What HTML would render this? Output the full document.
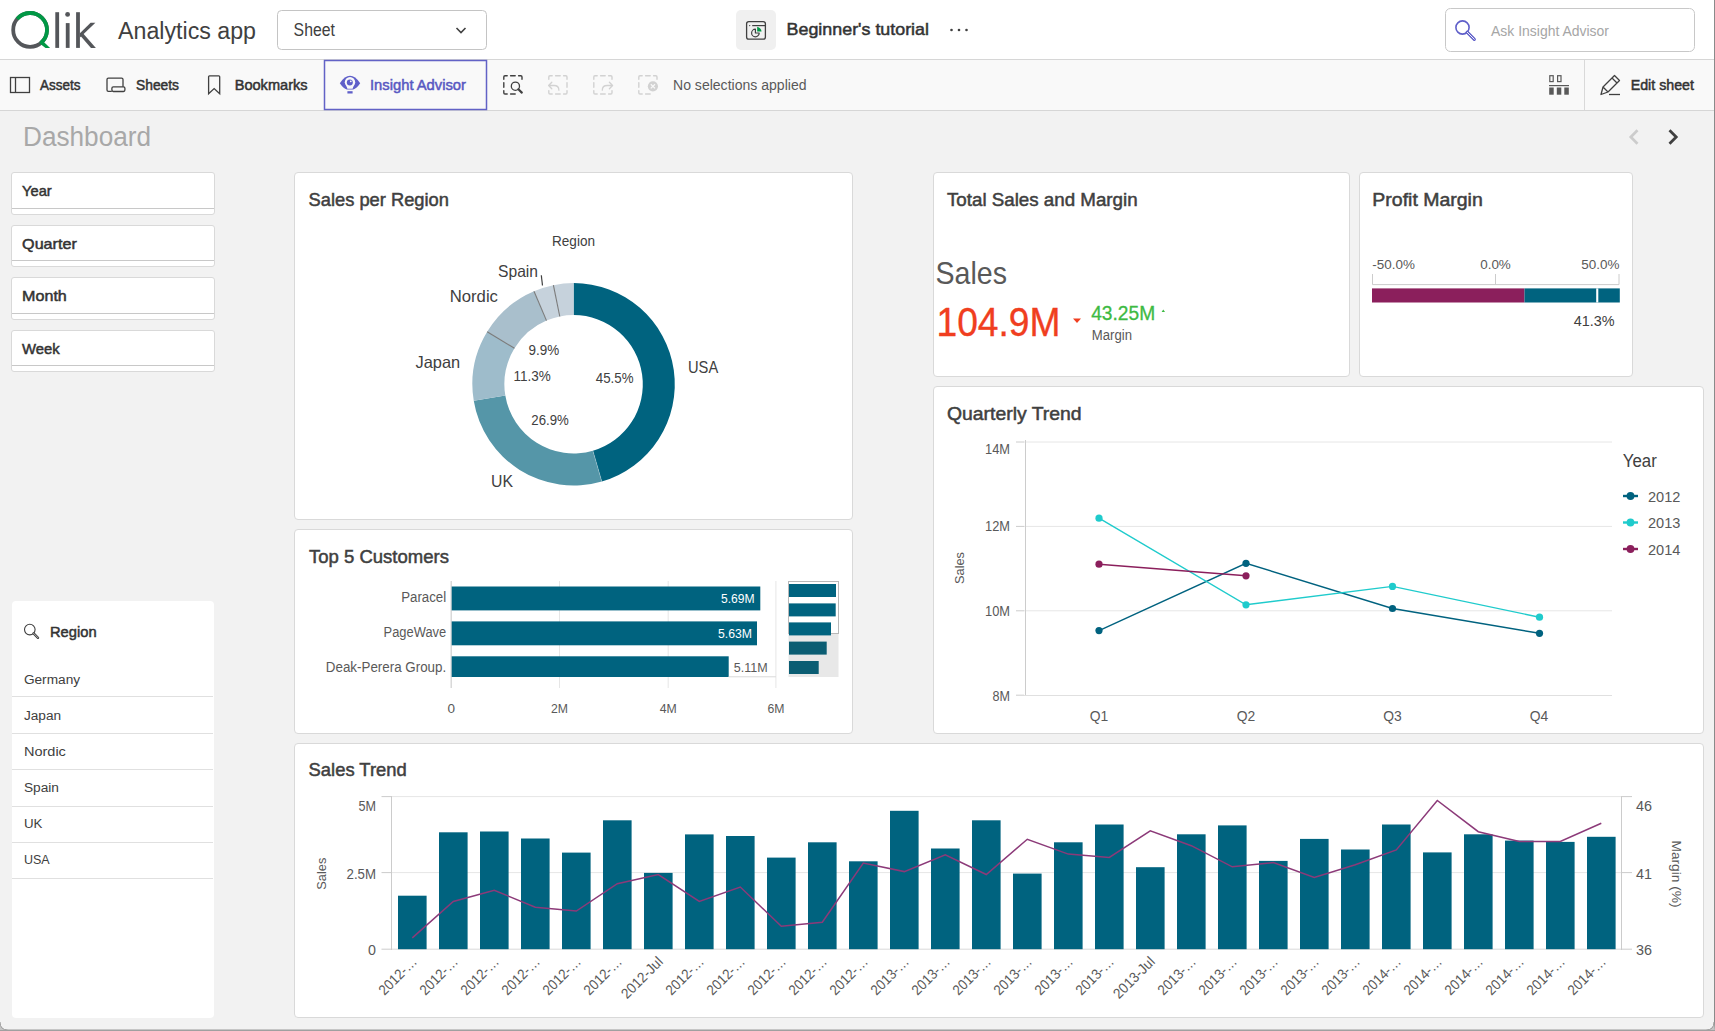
<!DOCTYPE html>
<html><head><meta charset="utf-8"><title>Qlik Analytics app</title>
<style>
html,body{margin:0;padding:0;width:1715px;height:1031px;overflow:hidden;background:#f2f2f2;font-family:"Liberation Sans", sans-serif;}
.abs{position:absolute;}
svg{position:absolute;left:0;top:0;overflow:visible;}
svg text{font-family:"Liberation Sans", sans-serif;}
.card{position:absolute;background:#fff;border:1px solid #d9d9d9;border-radius:4px;box-sizing:border-box;}
</style></head><body>

<div class="abs" style="left:0;top:0;width:1715px;height:59px;background:#fff;border-bottom:1px solid #d6d6d6;"></div>
<div class="abs" style="left:0;top:60px;width:1715px;height:50px;background:#f9f9f9;border-bottom:1px solid #d6d6d6;"></div>
<div class="abs" style="left:11px;top:172px;width:204px;height:43px;background:#fff;border:1px solid #d9d9d9;border-radius:3px;box-sizing:border-box;"></div>
<div class="abs" style="left:12px;top:208px;width:202px;height:1px;background:#c8c8c8;"></div>
<div class="abs" style="left:11px;top:225px;width:204px;height:42px;background:#fff;border:1px solid #d9d9d9;border-radius:3px;box-sizing:border-box;"></div>
<div class="abs" style="left:12px;top:260px;width:202px;height:1px;background:#c8c8c8;"></div>
<div class="abs" style="left:11px;top:277px;width:204px;height:43px;background:#fff;border:1px solid #d9d9d9;border-radius:3px;box-sizing:border-box;"></div>
<div class="abs" style="left:12px;top:313px;width:202px;height:1px;background:#c8c8c8;"></div>
<div class="abs" style="left:11px;top:330px;width:204px;height:42px;background:#fff;border:1px solid #d9d9d9;border-radius:3px;box-sizing:border-box;"></div>
<div class="abs" style="left:12px;top:365px;width:202px;height:1px;background:#c8c8c8;"></div>
<div class="abs" style="left:12px;top:601px;width:202px;height:417px;background:#fff;border-radius:4px;"></div>
<div class="abs" style="left:12px;top:696px;width:201px;height:1px;background:#e0e0e0;"></div>
<div class="abs" style="left:12px;top:733px;width:201px;height:1px;background:#e0e0e0;"></div>
<div class="abs" style="left:12px;top:769px;width:201px;height:1px;background:#e0e0e0;"></div>
<div class="abs" style="left:12px;top:806px;width:201px;height:1px;background:#e0e0e0;"></div>
<div class="abs" style="left:12px;top:842px;width:201px;height:1px;background:#e0e0e0;"></div>
<div class="abs" style="left:12px;top:878px;width:201px;height:1px;background:#e0e0e0;"></div>
<div class="card" style="left:294px;top:172px;width:559px;height:348px;"></div>
<div class="card" style="left:294px;top:529px;width:559px;height:205px;"></div>
<div class="card" style="left:933px;top:172px;width:417px;height:205px;"></div>
<div class="card" style="left:1359px;top:172px;width:274px;height:205px;"></div>
<div class="card" style="left:933px;top:386px;width:771px;height:348px;"></div>
<div class="card" style="left:294px;top:743px;width:1410px;height:275px;"></div>
<svg width="1715" height="1031" viewBox="0 0 1715 1031"><g>
<circle cx="30.1" cy="29.9" r="16.9" fill="none" stroke="#54565a" stroke-width="3.8"/>
<path d="M 17.15 19.04 A 16.9 16.9 0 1 1 40.74 43.03" fill="none" stroke="#009845" stroke-width="3.8"/>
<path d="M 39.3 43.3 L 42.3 40.4 L 50.1 47.9 L 45.6 47.9 Z" fill="#009845"/>
<rect x="55.3" y="12.2" width="3.8" height="35.7" fill="#54565a"/>
<rect x="65.8" y="23.1" width="3.8" height="24.8" fill="#54565a"/>
<circle cx="67.6" cy="14.4" r="2.4" fill="#54565a"/>
<rect x="76.1" y="12.2" width="3.8" height="35.7" fill="#54565a"/>
<path d="M 79.9 33.2 L 90.6 22.7 L 95.4 22.7 L 79.9 37.6 Z" fill="#54565a"/>
<path d="M 82.3 32.5 L 95.9 47.9 L 91 47.9 L 79.9 35.3 Z" fill="#54565a"/>
</g>
<text x="118.0" y="38.5" font-size="23.98" fill="#404040" textLength="138.0" lengthAdjust="spacingAndGlyphs">Analytics app</text>
<rect x="277.5" y="10.5" width="209" height="39" rx="4" fill="#fff" stroke="#c4c4c4"/>
<text x="293.6" y="36.0" font-size="17.44" fill="#404040" textLength="41.3" lengthAdjust="spacingAndGlyphs">Sheet</text>
<path d="M 456.5 28 L 461 32.5 L 465.5 28" stroke="#404040" stroke-width="1.6" fill="none"/>
<rect x="736" y="10" width="40" height="40" rx="5" fill="#f0f0f0"/>
<rect x="746.6" y="21.6" width="18.8" height="17.6" rx="2.2" fill="none" stroke="#404040" stroke-width="1.3"/>
<line x1="752.2" y1="25.6" x2="765.5" y2="25.6" stroke="#404040" stroke-width="1.2"/>
<circle cx="749.7" cy="25.6" r="0.7" fill="#404040"/>
<path d="M 755.4 29.2 A 3.8 3.8 0 1 0 759.2 33 L 755.4 33 Z" fill="none" stroke="#404040" stroke-width="1.2" stroke-linejoin="round"/>
<path d="M 757.2 26.8 L 757.2 31.4 L 761.6 31.4 Q 761 28 757.2 26.8 Z" fill="#009845"/>
<text x="786.6" y="35.4" font-size="17.15" stroke="#333333" stroke-width="0.5" fill="#333333" textLength="142.4" lengthAdjust="spacingAndGlyphs">Beginner's tutorial</text>
<circle cx="951.5" cy="30" r="1.3" fill="#404040"/>
<circle cx="959" cy="30" r="1.3" fill="#404040"/>
<circle cx="966.5" cy="30" r="1.3" fill="#404040"/>
<rect x="1445.5" y="8.5" width="249" height="43" rx="5" fill="#fff" stroke="#c8c8c8"/>
<circle cx="1462.5" cy="27.5" r="6.6" fill="none" stroke="#5f5fc9" stroke-width="1.6"/>
<path d="M 1467.2 32.2 L 1474.3 39.3" stroke="#5f5fc9" stroke-width="3.2" stroke-linecap="round"/>
<path d="M 1467.2 32.2 L 1474.3 39.3" stroke="#fff" stroke-width="0.9" stroke-linecap="round"/>
<text x="1491.0" y="35.7" font-size="14.83" fill="#a6a6a6" textLength="118.0" lengthAdjust="spacingAndGlyphs">Ask Insight Advisor</text>
<rect x="1714" y="0" width="1" height="1031" fill="#8a8a8a"/>
<rect x="10.5" y="77.5" width="19" height="15" fill="none" stroke="#404040" stroke-width="1.3"/>
<line x1="15.5" y1="77.5" x2="15.5" y2="92.5" stroke="#404040" stroke-width="1.3"/>
<text x="40.0" y="90.0" font-size="14.68" stroke="#333333" stroke-width="0.5" fill="#333333" textLength="40.5" lengthAdjust="spacingAndGlyphs">Assets</text>
<path d="M 123 86.8 V 79.6 Q 123 78.2 121.6 78.2 H 108.4 Q 107 78.2 107 79.6 V 90 Q 107 91.4 108.4 91.4 H 111.8" fill="none" stroke="#404040" stroke-width="1.3"/>
<rect x="111.9" y="86.8" width="13" height="4.7" rx="1.4" fill="none" stroke="#404040" stroke-width="1.3"/>
<text x="136.0" y="90.0" font-size="14.68" stroke="#333333" stroke-width="0.5" fill="#333333" textLength="43.0" lengthAdjust="spacingAndGlyphs">Sheets</text>
<path d="M 208.6 93.8 V 76.8 Q 208.6 75.9 209.5 75.9 H 218.8 Q 219.7 75.9 219.7 76.8 V 93.8 L 214.15 88.6 Z" fill="none" stroke="#404040" stroke-width="1.3" stroke-linejoin="miter"/>
<text x="234.7" y="90.0" font-size="14.68" stroke="#333333" stroke-width="0.5" fill="#333333" textLength="72.9" lengthAdjust="spacingAndGlyphs">Bookmarks</text>
<rect x="324.5" y="60.5" width="162" height="49" fill="#f9f9f9" stroke="#6262c6" stroke-width="1.5"/>
<path d="M 339.8 83.2 Q 350 68.5 360.2 83.2 Q 356.5 88.6 353.2 89.6 L 346.8 89.6 Q 343.5 88.6 339.8 83.2 Z" fill="#5f5fc9"/>
<circle cx="350" cy="82.3" r="5.2" fill="#f9f9f9"/>
<path d="M 346.3 85.6 L 353.7 85.6 L 352.6 88.8 L 347.4 88.8 Z" fill="#f9f9f9"/>
<circle cx="349.8" cy="82.4" r="3" fill="#5f5fc9"/>
<circle cx="350.8" cy="81.3" r="0.9" fill="#f9f9f9"/>
<rect x="347.4" y="91.2" width="5.2" height="2.3" fill="#5f5fc9"/>
<text x="370.0" y="90.0" font-size="14.68" stroke="#5858c2" stroke-width="0.5" fill="#5858c2" textLength="96.0" lengthAdjust="spacingAndGlyphs">Insight Advisor</text>
<path d="M 503.8 79.2 V 77.0 Q 503.8 75.8 505.0 75.8 H 507.2 M 518.6 75.8 H 520.8 Q 522.0 75.8 522.0 77.0 V 79.2 M 507.2 94.0 H 505.0 Q 503.8 94.0 503.8 92.8 V 90.6 M 510.6 75.8 H 515.2 M 510.6 94.0 H 515.2 M 503.8 82.6 V 87.2" fill="none" stroke="#404040" stroke-width="1.4" stroke-linecap="round"/>
<circle cx="515.4" cy="86.2" r="4.1" fill="none" stroke="#404040" stroke-width="1.3"/>
<path d="M 518.4 89.3 L 521.8 92.6" stroke="#404040" stroke-width="2.2" stroke-linecap="round"/>
<path d="M 548.8 79.2 V 77.0 Q 548.8 75.8 550.0 75.8 H 552.1999999999999 M 563.6 75.8 H 565.8 Q 567.0 75.8 567.0 77.0 V 79.2 M 567.0 90.6 V 92.8 Q 567.0 94.0 565.8 94.0 H 563.6 M 552.1999999999999 94.0 H 550.0 Q 548.8 94.0 548.8 92.8 V 90.6 M 555.5999999999999 75.8 H 560.2 M 555.5999999999999 94.0 H 560.2 M 567.0 82.6 V 87.2" fill="none" stroke="#d2d2d2" stroke-width="1.4" stroke-linecap="round"/>
<path d="M 551.8 82.2 L 548.6 85.5 L 551.8 88.8 M 548.6 85.5 H 554 Q 558.9 85.5 558.9 90.2" fill="none" stroke="#d2d2d2" stroke-width="1.3" stroke-linecap="round" stroke-linejoin="round"/>
<path d="M 593.8 79.2 V 77.0 Q 593.8 75.8 595.0 75.8 H 597.1999999999999 M 608.6 75.8 H 610.8 Q 612.0 75.8 612.0 77.0 V 79.2 M 612.0 90.6 V 92.8 Q 612.0 94.0 610.8 94.0 H 608.6 M 597.1999999999999 94.0 H 595.0 Q 593.8 94.0 593.8 92.8 V 90.6 M 600.5999999999999 75.8 H 605.2 M 600.5999999999999 94.0 H 605.2 M 593.8 82.6 V 87.2" fill="none" stroke="#d2d2d2" stroke-width="1.4" stroke-linecap="round"/>
<path d="M 609.4 82.2 L 612.6 85.5 L 609.4 88.8 M 612.6 85.5 H 607.2 Q 602.3 85.5 602.3 90.2" fill="none" stroke="#d2d2d2" stroke-width="1.3" stroke-linecap="round" stroke-linejoin="round"/>
<path d="M 638.8 79.2 V 77.0 Q 638.8 75.8 640.0 75.8 H 642.1999999999999 M 653.6 75.8 H 655.8 Q 657.0 75.8 657.0 77.0 V 79.2 M 642.1999999999999 94.0 H 640.0 Q 638.8 94.0 638.8 92.8 V 90.6 M 645.5999999999999 75.8 H 650.2 M 645.5999999999999 94.0 H 650.2 M 638.8 82.6 V 87.2" fill="none" stroke="#d2d2d2" stroke-width="1.4" stroke-linecap="round"/>
<circle cx="652.9" cy="86.3" r="5.1" fill="#d2d2d2"/>
<path d="M 650.8 84.2 L 655 88.4 M 655 84.2 L 650.8 88.4" stroke="#f9f9f9" stroke-width="1.3"/>
<text x="673.0" y="90.0" font-size="15.26" fill="#595959" textLength="133.5" lengthAdjust="spacingAndGlyphs">No selections applied</text>
<line x1="1584.5" y1="60" x2="1584.5" y2="110" stroke="#d9d9d9"/>
<rect x="1549.8" y="75.7" width="3.4" height="5.9" fill="none" stroke="#595959" stroke-width="1.2"/>
<rect x="1557.6" y="75.7" width="3.4" height="5.9" fill="none" stroke="#595959" stroke-width="1.2"/>
<line x1="1549" y1="85.6" x2="1569" y2="85.6" stroke="#595959" stroke-width="1.2"/>
<rect x="1549.2" y="87.5" width="4.5" height="7.2" fill="#595959"/>
<rect x="1556.8" y="87.5" width="4.5" height="7.2" fill="#595959"/>
<rect x="1564.3" y="87.5" width="4.5" height="7.2" fill="#595959"/>
<path d="M 1601 94.5 L 1603 87 L 1614.5 75.5 L 1619.5 80.5 L 1608 92 Z M 1603 87 L 1608 92 M 1612 78 L 1617 83" fill="none" stroke="#404040" stroke-width="1.3" stroke-linejoin="round"/>
<line x1="1609" y1="94.5" x2="1620" y2="94.5" stroke="#404040" stroke-width="1.3"/>
<text x="1630.7" y="90.0" font-size="14.68" stroke="#333333" stroke-width="0.5" fill="#333333" textLength="63.3" lengthAdjust="spacingAndGlyphs">Edit sheet</text>
<text x="23.0" y="146.0" font-size="28.34" fill="#a8a8a8" textLength="128.0" lengthAdjust="spacingAndGlyphs">Dashboard</text>
<path d="M 1637.5 130.3 L 1630.8 137 L 1637.5 143.7" fill="none" stroke="#cccccc" stroke-width="2.7"/>
<path d="M 1669.5 130.3 L 1676.2 137 L 1669.5 143.7" fill="none" stroke="#404040" stroke-width="2.8"/>
<text x="22.1" y="196.0" font-size="15.12" stroke="#333333" stroke-width="0.5" fill="#333333" textLength="29.6" lengthAdjust="spacingAndGlyphs">Year</text>
<text x="22.1" y="249.1" font-size="15.12" stroke="#333333" stroke-width="0.5" fill="#333333" textLength="54.7" lengthAdjust="spacingAndGlyphs">Quarter</text>
<text x="22.1" y="301.0" font-size="15.12" stroke="#333333" stroke-width="0.5" fill="#333333" textLength="44.7" lengthAdjust="spacingAndGlyphs">Month</text>
<text x="22.1" y="353.9" font-size="15.12" stroke="#333333" stroke-width="0.5" fill="#333333" textLength="37.7" lengthAdjust="spacingAndGlyphs">Week</text>
<circle cx="29.8" cy="629.6" r="5.3" fill="none" stroke="#404040" stroke-width="1.1"/>
<path d="M 33.6 633.4 L 38 637.8" stroke="#404040" stroke-width="2.4" stroke-linecap="round"/>
<path d="M 33.6 633.4 L 38 637.8" stroke="#fff" stroke-width="0.6" stroke-linecap="round"/>
<text x="50.0" y="636.8" font-size="14.97" stroke="#333333" stroke-width="0.5" fill="#333333" textLength="46.6" lengthAdjust="spacingAndGlyphs">Region</text>
<text x="23.9" y="683.7" font-size="13.66" fill="#404040" textLength="56.2" lengthAdjust="spacingAndGlyphs">Germany</text>
<text x="23.9" y="719.8" font-size="13.66" fill="#404040" textLength="37.2" lengthAdjust="spacingAndGlyphs">Japan</text>
<text x="23.9" y="755.9" font-size="13.66" fill="#404040" textLength="42.0" lengthAdjust="spacingAndGlyphs">Nordic</text>
<text x="23.9" y="792.0" font-size="13.66" fill="#404040" textLength="35.1" lengthAdjust="spacingAndGlyphs">Spain</text>
<text x="23.9" y="828.1" font-size="13.66" fill="#404040" textLength="18.5" lengthAdjust="spacingAndGlyphs">UK</text>
<text x="23.9" y="864.2" font-size="13.66" fill="#404040" textLength="25.7" lengthAdjust="spacingAndGlyphs">USA</text>
<text x="308.6" y="205.7" font-size="18.46" stroke="#404040" stroke-width="0.5" fill="#404040" textLength="140.3" lengthAdjust="spacingAndGlyphs">Sales per Region</text>
<text x="309.0" y="562.5" font-size="18.46" stroke="#404040" stroke-width="0.5" fill="#404040" textLength="139.9" lengthAdjust="spacingAndGlyphs">Top 5 Customers</text>
<text x="947.0" y="205.7" font-size="18.46" stroke="#404040" stroke-width="0.5" fill="#404040" textLength="190.6" lengthAdjust="spacingAndGlyphs">Total Sales and Margin</text>
<text x="1372.3" y="205.7" font-size="18.46" stroke="#404040" stroke-width="0.5" fill="#404040" textLength="110.5" lengthAdjust="spacingAndGlyphs">Profit Margin</text>
<text x="947.0" y="419.6" font-size="18.46" stroke="#404040" stroke-width="0.5" fill="#404040" textLength="134.6" lengthAdjust="spacingAndGlyphs">Quarterly Trend</text>
<text x="308.6" y="776.4" font-size="18.46" stroke="#404040" stroke-width="0.5" fill="#404040" textLength="98.1" lengthAdjust="spacingAndGlyphs">Sales Trend</text>
<path d="M 573.60 283.10 A 101.2 101.2 0 0 1 601.83 481.48 L 592.91 450.75 A 69.2 69.2 0 0 0 573.60 315.10 Z" fill="#00637f"/>
<path d="M 601.83 481.48 A 101.2 101.2 0 0 1 473.75 400.76 L 505.32 395.55 A 69.2 69.2 0 0 0 592.91 450.75 Z" fill="#5596a8"/>
<path d="M 473.75 400.76 A 101.2 101.2 0 0 1 487.15 331.69 L 514.48 348.33 A 69.2 69.2 0 0 0 505.32 395.55 Z" fill="#9ebccb"/>
<path d="M 487.15 331.69 A 101.2 101.2 0 0 1 533.99 291.17 L 546.52 320.62 A 69.2 69.2 0 0 0 514.48 348.33 Z" fill="#a9bfcc"/>
<path d="M 533.99 291.17 A 101.2 101.2 0 0 1 553.39 285.14 L 559.78 316.49 A 69.2 69.2 0 0 0 546.52 320.62 Z" fill="#c6d2dc"/>
<path d="M 553.39 285.14 A 101.2 101.2 0 0 1 573.60 283.10 L 573.60 315.10 A 69.2 69.2 0 0 0 559.78 316.49 Z" fill="#c6d2dc"/>
<line x1="487.15" y1="331.69" x2="514.48" y2="348.33" stroke="#7a7a7a" stroke-width="1.1"/>
<line x1="533.99" y1="291.17" x2="546.52" y2="320.62" stroke="#7a7a7a" stroke-width="1.1"/>
<line x1="553.39" y1="285.14" x2="559.78" y2="316.49" stroke="#7a7a7a" stroke-width="1.1"/>
<line x1="601.83" y1="481.48" x2="592.91" y2="450.75" stroke="#ffffff" stroke-width="0.5" opacity="0.5"/>
<line x1="541.3" y1="275.2" x2="542.5" y2="285.5" stroke="#404040" stroke-width="1.2"/>
<text x="552.0" y="245.5" font-size="13.95" fill="#404040" textLength="43.0" lengthAdjust="spacingAndGlyphs">Region</text>
<text x="498.0" y="276.6" font-size="16.28" fill="#404040" textLength="40.0" lengthAdjust="spacingAndGlyphs">Spain</text>
<text x="449.7" y="301.8" font-size="16.28" fill="#404040" textLength="48.3" lengthAdjust="spacingAndGlyphs">Nordic</text>
<text x="415.5" y="368.0" font-size="16.28" fill="#404040" textLength="44.7" lengthAdjust="spacingAndGlyphs">Japan</text>
<text x="688.0" y="373.0" font-size="16.28" fill="#404040" textLength="30.2" lengthAdjust="spacingAndGlyphs">USA</text>
<text x="491.0" y="487.0" font-size="16.28" fill="#404040" textLength="22.0" lengthAdjust="spacingAndGlyphs">UK</text>
<text x="528.5" y="355.0" font-size="13.95" fill="#404040" textLength="30.7" lengthAdjust="spacingAndGlyphs">9.9%</text>
<text x="513.5" y="381.0" font-size="13.95" fill="#404040" textLength="37.3" lengthAdjust="spacingAndGlyphs">11.3%</text>
<text x="595.8" y="383.0" font-size="13.95" fill="#404040" textLength="37.7" lengthAdjust="spacingAndGlyphs">45.5%</text>
<text x="531.3" y="425.0" font-size="13.95" fill="#404040" textLength="37.5" lengthAdjust="spacingAndGlyphs">26.9%</text>
<line x1="451.2" y1="581" x2="451.2" y2="688" stroke="#e6e6e6" stroke-width="1"/>
<line x1="559.5" y1="581" x2="559.5" y2="688" stroke="#e6e6e6" stroke-width="1"/>
<line x1="668.2" y1="581" x2="668.2" y2="688" stroke="#e6e6e6" stroke-width="1"/>
<line x1="775.9" y1="581" x2="775.9" y2="688" stroke="#e6e6e6" stroke-width="1"/>
<line x1="451.2" y1="581" x2="451.2" y2="688" stroke="#d0d0d0" stroke-width="1"/>
<rect x="451.7" y="586.5" width="308.6" height="23.9" fill="#00637f"/>
<rect x="451.7" y="621.4" width="305.3" height="23.9" fill="#00637f"/>
<rect x="451.7" y="656.3" width="277.0" height="20.7" fill="#00637f"/>
<text x="446.2" y="602.0" font-size="13.95" fill="#595959" text-anchor="end" textLength="45.0" lengthAdjust="spacingAndGlyphs">Paracel</text>
<text x="446.2" y="637.0" font-size="13.95" fill="#595959" text-anchor="end" textLength="62.6" lengthAdjust="spacingAndGlyphs">PageWave</text>
<text x="446.2" y="672.0" font-size="13.95" fill="#595959" text-anchor="end" textLength="120.4" lengthAdjust="spacingAndGlyphs">Deak-Perera Group.</text>
<text x="754.6" y="602.8" font-size="12.50" fill="#ffffff" text-anchor="end" textLength="33.6" lengthAdjust="spacingAndGlyphs">5.69M</text>
<text x="752.0" y="637.8" font-size="12.50" fill="#ffffff" text-anchor="end" textLength="34.0" lengthAdjust="spacingAndGlyphs">5.63M</text>
<text x="767.6" y="671.8" font-size="12.50" fill="#595959" text-anchor="end" textLength="33.9" lengthAdjust="spacingAndGlyphs">5.11M</text>
<line x1="728.7" y1="676.8" x2="775.9" y2="676.8" stroke="#d9d9d9" stroke-width="1"/>
<text x="451.2" y="712.5" font-size="13.52" fill="#595959" text-anchor="middle">0</text>
<text x="559.5" y="712.5" font-size="13.52" fill="#595959" text-anchor="middle" textLength="17.0" lengthAdjust="spacingAndGlyphs">2M</text>
<text x="668.2" y="712.5" font-size="13.52" fill="#595959" text-anchor="middle" textLength="17.0" lengthAdjust="spacingAndGlyphs">4M</text>
<text x="775.9" y="712.5" font-size="13.52" fill="#595959" text-anchor="middle" textLength="17.0" lengthAdjust="spacingAndGlyphs">6M</text>
<rect x="788.5" y="581.5" width="50" height="95.5" fill="#e8e8e8"/>
<rect x="788.5" y="581.5" width="50" height="52" fill="#ffffff" stroke="#b8b8b8" stroke-width="1"/>
<rect x="789" y="584" width="47.0" height="13" fill="#00637f"/>
<rect x="789" y="603.4" width="46.7" height="13" fill="#00637f"/>
<rect x="789" y="622.4" width="42.0" height="13" fill="#00637f"/>
<rect x="789" y="641.6" width="37.7" height="13" fill="#0b5d73"/>
<rect x="789" y="661" width="29.7" height="13" fill="#0b5d73"/>
<text x="935.5" y="283.8" font-size="32.27" fill="#595959" textLength="71.5" lengthAdjust="spacingAndGlyphs">Sales</text>
<text x="936.5" y="336.0" font-size="41.28" fill="#f03e20" textLength="124.0" lengthAdjust="spacingAndGlyphs" stroke="#f03e20" stroke-width="0.35">104.9M</text>
<path d="M 1073 318.5 L 1081 318.5 L 1077 323 Z" fill="#f03e20"/>
<text x="1091.2" y="320.0" font-size="20.35" fill="#3dba43" textLength="64.0" lengthAdjust="spacingAndGlyphs" stroke="#3dba43" stroke-width="0.3">43.25M</text>
<path d="M 1161.6 312 L 1165 312 L 1163.3 309.6 Z" fill="#3dba43"/>
<text x="1091.8" y="339.5" font-size="14.24" fill="#595959" textLength="40.2" lengthAdjust="spacingAndGlyphs">Margin</text>
<text x="1372.3" y="268.5" font-size="13.37" fill="#595959" textLength="42.6" lengthAdjust="spacingAndGlyphs">-50.0%</text>
<text x="1495.5" y="268.5" font-size="13.37" fill="#595959" text-anchor="middle" textLength="30.6" lengthAdjust="spacingAndGlyphs">0.0%</text>
<text x="1619.5" y="268.5" font-size="13.37" fill="#595959" text-anchor="end" textLength="38.2" lengthAdjust="spacingAndGlyphs">50.0%</text>
<path d="M 1372.5 274 V 284.6 H 1619 V 274 M 1495.5 274 V 284.6" fill="none" stroke="#cccccc" stroke-width="1"/>
<rect x="1372" y="288.4" width="152.5" height="14.1" fill="#8b1f5c"/>
<rect x="1524.5" y="288.4" width="95.3" height="14.1" fill="#00637f"/>
<rect x="1596.2" y="288.4" width="2.1" height="14.1" fill="#ffffff"/>
<text x="1614.6" y="326.0" font-size="13.95" fill="#404040" text-anchor="end" textLength="40.9" lengthAdjust="spacingAndGlyphs">41.3%</text>
<line x1="1024" y1="610.8" x2="1612" y2="610.8" stroke="#e6e6e6" stroke-width="1"/>
<line x1="1024" y1="526.4" x2="1612" y2="526.4" stroke="#e6e6e6" stroke-width="1"/>
<line x1="1024" y1="442.0" x2="1612" y2="442.0" stroke="#e6e6e6" stroke-width="1"/>
<line x1="1025.5" y1="440" x2="1025.5" y2="695.5" stroke="#cccccc" stroke-width="1"/>
<line x1="1024" y1="695.5" x2="1612" y2="695.5" stroke="#e0e0e0" stroke-width="1"/>
<line x1="1016" y1="695.2" x2="1024" y2="695.2" stroke="#cccccc" stroke-width="1"/>
<line x1="1016" y1="610.8" x2="1024" y2="610.8" stroke="#cccccc" stroke-width="1"/>
<line x1="1016" y1="526.4" x2="1024" y2="526.4" stroke="#cccccc" stroke-width="1"/>
<line x1="1016" y1="442.0" x2="1024" y2="442.0" stroke="#cccccc" stroke-width="1"/>
<text x="1010.0" y="701.0" font-size="14.24" fill="#595959" text-anchor="end" textLength="17.5" lengthAdjust="spacingAndGlyphs">8M</text>
<text x="1010.0" y="616.0" font-size="14.24" fill="#595959" text-anchor="end" textLength="25.0" lengthAdjust="spacingAndGlyphs">10M</text>
<text x="1010.0" y="531.0" font-size="14.24" fill="#595959" text-anchor="end" textLength="25.0" lengthAdjust="spacingAndGlyphs">12M</text>
<text x="1010.0" y="454.0" font-size="14.24" fill="#595959" text-anchor="end" textLength="25.0" lengthAdjust="spacingAndGlyphs">14M</text>
<text x="1099.0" y="720.8" font-size="13.95" fill="#595959" text-anchor="middle" textLength="18.5" lengthAdjust="spacingAndGlyphs">Q1</text>
<text x="1246.0" y="720.8" font-size="13.95" fill="#595959" text-anchor="middle" textLength="18.5" lengthAdjust="spacingAndGlyphs">Q2</text>
<text x="1392.5" y="720.8" font-size="13.95" fill="#595959" text-anchor="middle" textLength="18.5" lengthAdjust="spacingAndGlyphs">Q3</text>
<text x="1539.0" y="720.8" font-size="13.95" fill="#595959" text-anchor="middle" textLength="18.5" lengthAdjust="spacingAndGlyphs">Q4</text>
<text x="0" y="0" font-size="13.52" fill="#595959" text-anchor="middle" textLength="32" lengthAdjust="spacingAndGlyphs" transform="translate(963.5 568) rotate(-90)">Sales</text>
<path d="M 1099 630.6 L 1246 563.3 L 1392.5 608.5 L 1539.5 633.3" fill="none" stroke="#00627f" stroke-width="1.4"/>
<circle cx="1099" cy="630.6" r="3.6" fill="#00627f"/>
<circle cx="1246" cy="563.3" r="3.6" fill="#00627f"/>
<circle cx="1392.5" cy="608.5" r="3.6" fill="#00627f"/>
<circle cx="1539.5" cy="633.3" r="3.6" fill="#00627f"/>
<path d="M 1099 518.2 L 1246 604.8 L 1392.5 586.4 L 1539.5 617.2" fill="none" stroke="#1fcbcc" stroke-width="1.4"/>
<circle cx="1099" cy="518.2" r="3.6" fill="#1fcbcc"/>
<circle cx="1246" cy="604.8" r="3.6" fill="#1fcbcc"/>
<circle cx="1392.5" cy="586.4" r="3.6" fill="#1fcbcc"/>
<circle cx="1539.5" cy="617.2" r="3.6" fill="#1fcbcc"/>
<path d="M 1099 564.2 L 1246 575.8" fill="none" stroke="#8b1f5c" stroke-width="1.4"/>
<circle cx="1099" cy="564.2" r="3.6" fill="#8b1f5c"/>
<circle cx="1246" cy="575.8" r="3.6" fill="#8b1f5c"/>
<text x="1622.8" y="466.7" font-size="18.90" fill="#404040" textLength="34.0" lengthAdjust="spacingAndGlyphs">Year</text>
<line x1="1623" y1="496.0" x2="1638" y2="496.0" stroke="#00627f" stroke-width="2.4"/>
<circle cx="1630.5" cy="496.0" r="3.9" fill="#00627f"/>
<text x="1648.0" y="501.6" font-size="15.12" fill="#595959" textLength="32.4" lengthAdjust="spacingAndGlyphs">2012</text>
<line x1="1623" y1="522.5" x2="1638" y2="522.5" stroke="#1fcbcc" stroke-width="2.4"/>
<circle cx="1630.5" cy="522.5" r="3.9" fill="#1fcbcc"/>
<text x="1648.0" y="528.1" font-size="15.12" fill="#595959" textLength="32.4" lengthAdjust="spacingAndGlyphs">2013</text>
<line x1="1623" y1="549.0" x2="1638" y2="549.0" stroke="#8b1f5c" stroke-width="2.4"/>
<circle cx="1630.5" cy="549.0" r="3.9" fill="#8b1f5c"/>
<text x="1648.0" y="554.6" font-size="15.12" fill="#595959" textLength="32.4" lengthAdjust="spacingAndGlyphs">2014</text>
<line x1="391" y1="796.6" x2="1621" y2="796.6" stroke="#e6e6e6" stroke-width="1"/>
<line x1="391" y1="872.6" x2="1621" y2="872.6" stroke="#e6e6e6" stroke-width="1"/>
<line x1="391" y1="949.2" x2="1621" y2="949.2" stroke="#d9d9d9" stroke-width="1"/>
<line x1="391.5" y1="796.5" x2="391.5" y2="950" stroke="#cccccc" stroke-width="1"/>
<line x1="1621.5" y1="796.5" x2="1621.5" y2="950" stroke="#cccccc" stroke-width="1"/>
<line x1="381.5" y1="796.6" x2="392" y2="796.6" stroke="#cccccc" stroke-width="1"/>
<line x1="1621" y1="796.6" x2="1632" y2="796.6" stroke="#cccccc" stroke-width="1"/>
<line x1="381.5" y1="872.6" x2="392" y2="872.6" stroke="#cccccc" stroke-width="1"/>
<line x1="1621" y1="872.6" x2="1632" y2="872.6" stroke="#cccccc" stroke-width="1"/>
<line x1="381.5" y1="949.2" x2="392" y2="949.2" stroke="#cccccc" stroke-width="1"/>
<line x1="1621" y1="949.2" x2="1632" y2="949.2" stroke="#cccccc" stroke-width="1"/>
<rect x="398" y="895.7" width="28.6" height="53.5" fill="#00637f"/>
<rect x="439" y="832.3" width="28.6" height="116.9" fill="#00637f"/>
<rect x="480" y="831.5" width="28.6" height="117.7" fill="#00637f"/>
<rect x="521" y="838.5" width="28.6" height="110.7" fill="#00637f"/>
<rect x="562" y="852.6" width="28.6" height="96.6" fill="#00637f"/>
<rect x="603" y="820.3" width="28.6" height="128.9" fill="#00637f"/>
<rect x="644" y="872.9" width="28.6" height="76.3" fill="#00637f"/>
<rect x="685" y="834.4" width="28.6" height="114.8" fill="#00637f"/>
<rect x="726" y="836" width="28.6" height="113.2" fill="#00637f"/>
<rect x="767" y="857.6" width="28.6" height="91.6" fill="#00637f"/>
<rect x="808" y="842.3" width="28.6" height="106.9" fill="#00637f"/>
<rect x="849" y="861.3" width="28.6" height="87.9" fill="#00637f"/>
<rect x="890" y="810.8" width="28.6" height="138.4" fill="#00637f"/>
<rect x="931" y="848.5" width="28.6" height="100.7" fill="#00637f"/>
<rect x="972" y="820.3" width="28.6" height="128.9" fill="#00637f"/>
<rect x="1013" y="873.6" width="28.6" height="75.6" fill="#00637f"/>
<rect x="1054" y="842.3" width="28.6" height="106.9" fill="#00637f"/>
<rect x="1095" y="824.5" width="28.6" height="124.7" fill="#00637f"/>
<rect x="1136" y="867.2" width="28.6" height="82.0" fill="#00637f"/>
<rect x="1177" y="834.3" width="28.6" height="114.9" fill="#00637f"/>
<rect x="1218" y="825.4" width="28.6" height="123.8" fill="#00637f"/>
<rect x="1259" y="860.9" width="28.6" height="88.3" fill="#00637f"/>
<rect x="1300" y="838.9" width="28.6" height="110.3" fill="#00637f"/>
<rect x="1341" y="849.5" width="28.6" height="99.7" fill="#00637f"/>
<rect x="1382" y="824.5" width="28.6" height="124.7" fill="#00637f"/>
<rect x="1423" y="852.4" width="28.6" height="96.8" fill="#00637f"/>
<rect x="1464" y="834.3" width="28.6" height="114.9" fill="#00637f"/>
<rect x="1505" y="840.6" width="28.6" height="108.6" fill="#00637f"/>
<rect x="1546" y="841.9" width="28.6" height="107.3" fill="#00637f"/>
<rect x="1587" y="836.8" width="28.6" height="112.4" fill="#00637f"/>
<path d="M 412.3 937.9 L 453.3 901.5 L 494.3 890.3 L 535.3 907.3 L 576.3 911 L 617.3 883.7 L 658.3 874.5 L 699.3 901.5 L 740.3 887 L 781.3 926.3 L 822.3 922.2 L 863.3 863 L 904.3 871.6 L 945.3 854.7 L 986.3 874.5 L 1027.3 839.3 L 1068.3 854.1 L 1109.3 857.5 L 1150.3 830.9 L 1191.3 845.7 L 1232.3 866.8 L 1273.3 862.6 L 1314.3 877.4 L 1355.3 864.7 L 1396.3 849.9 L 1437.3 800.5 L 1478.3 831.7 L 1519.3 841.5 L 1560.3 841.5 L 1601.3 823.3" fill="none" stroke="#8c3a79" stroke-width="1.5"/>
<text x="376.0" y="811.0" font-size="14.24" fill="#595959" text-anchor="end" textLength="17.5" lengthAdjust="spacingAndGlyphs">5M</text>
<text x="376.0" y="879.0" font-size="14.24" fill="#595959" text-anchor="end" textLength="29.5" lengthAdjust="spacingAndGlyphs">2.5M</text>
<text x="376.0" y="955.3" font-size="14.24" fill="#595959" text-anchor="end">0</text>
<text x="1636.0" y="810.5" font-size="14.24" fill="#595959" textLength="16.0" lengthAdjust="spacingAndGlyphs">46</text>
<text x="1636.0" y="878.7" font-size="14.24" fill="#595959" textLength="16.0" lengthAdjust="spacingAndGlyphs">41</text>
<text x="1636.0" y="955.0" font-size="14.24" fill="#595959" textLength="16.0" lengthAdjust="spacingAndGlyphs">36</text>
<text x="0" y="0" font-size="13.52" fill="#595959" text-anchor="middle" textLength="32" lengthAdjust="spacingAndGlyphs" transform="translate(325.5 873.7) rotate(-90)">Sales</text>
<text x="0" y="0" font-size="13.52" fill="#595959" text-anchor="middle" textLength="67" lengthAdjust="spacingAndGlyphs" transform="translate(1671.5 874) rotate(90)">Margin (%)</text>
<text x="0" y="0" font-size="14.54" fill="#595959" text-anchor="end" textLength="47" lengthAdjust="spacingAndGlyphs" transform="translate(417.8 962.7) rotate(-45)">2012-…</text>
<text x="0" y="0" font-size="14.54" fill="#595959" text-anchor="end" textLength="47" lengthAdjust="spacingAndGlyphs" transform="translate(458.8 962.7) rotate(-45)">2012-…</text>
<text x="0" y="0" font-size="14.54" fill="#595959" text-anchor="end" textLength="47" lengthAdjust="spacingAndGlyphs" transform="translate(499.8 962.7) rotate(-45)">2012-…</text>
<text x="0" y="0" font-size="14.54" fill="#595959" text-anchor="end" textLength="47" lengthAdjust="spacingAndGlyphs" transform="translate(540.8 962.7) rotate(-45)">2012-…</text>
<text x="0" y="0" font-size="14.54" fill="#595959" text-anchor="end" textLength="47" lengthAdjust="spacingAndGlyphs" transform="translate(581.8 962.7) rotate(-45)">2012-…</text>
<text x="0" y="0" font-size="14.54" fill="#595959" text-anchor="end" textLength="47" lengthAdjust="spacingAndGlyphs" transform="translate(622.8 962.7) rotate(-45)">2012-…</text>
<text x="0" y="0" font-size="14.54" fill="#595959" text-anchor="end" textLength="52" lengthAdjust="spacingAndGlyphs" transform="translate(663.8 962.7) rotate(-45)">2012-Jul</text>
<text x="0" y="0" font-size="14.54" fill="#595959" text-anchor="end" textLength="47" lengthAdjust="spacingAndGlyphs" transform="translate(704.8 962.7) rotate(-45)">2012-…</text>
<text x="0" y="0" font-size="14.54" fill="#595959" text-anchor="end" textLength="47" lengthAdjust="spacingAndGlyphs" transform="translate(745.8 962.7) rotate(-45)">2012-…</text>
<text x="0" y="0" font-size="14.54" fill="#595959" text-anchor="end" textLength="47" lengthAdjust="spacingAndGlyphs" transform="translate(786.8 962.7) rotate(-45)">2012-…</text>
<text x="0" y="0" font-size="14.54" fill="#595959" text-anchor="end" textLength="47" lengthAdjust="spacingAndGlyphs" transform="translate(827.8 962.7) rotate(-45)">2012-…</text>
<text x="0" y="0" font-size="14.54" fill="#595959" text-anchor="end" textLength="47" lengthAdjust="spacingAndGlyphs" transform="translate(868.8 962.7) rotate(-45)">2012-…</text>
<text x="0" y="0" font-size="14.54" fill="#595959" text-anchor="end" textLength="47" lengthAdjust="spacingAndGlyphs" transform="translate(909.8 962.7) rotate(-45)">2013-…</text>
<text x="0" y="0" font-size="14.54" fill="#595959" text-anchor="end" textLength="47" lengthAdjust="spacingAndGlyphs" transform="translate(950.8 962.7) rotate(-45)">2013-…</text>
<text x="0" y="0" font-size="14.54" fill="#595959" text-anchor="end" textLength="47" lengthAdjust="spacingAndGlyphs" transform="translate(991.8 962.7) rotate(-45)">2013-…</text>
<text x="0" y="0" font-size="14.54" fill="#595959" text-anchor="end" textLength="47" lengthAdjust="spacingAndGlyphs" transform="translate(1032.8 962.7) rotate(-45)">2013-…</text>
<text x="0" y="0" font-size="14.54" fill="#595959" text-anchor="end" textLength="47" lengthAdjust="spacingAndGlyphs" transform="translate(1073.8 962.7) rotate(-45)">2013-…</text>
<text x="0" y="0" font-size="14.54" fill="#595959" text-anchor="end" textLength="47" lengthAdjust="spacingAndGlyphs" transform="translate(1114.8 962.7) rotate(-45)">2013-…</text>
<text x="0" y="0" font-size="14.54" fill="#595959" text-anchor="end" textLength="52" lengthAdjust="spacingAndGlyphs" transform="translate(1155.8 962.7) rotate(-45)">2013-Jul</text>
<text x="0" y="0" font-size="14.54" fill="#595959" text-anchor="end" textLength="47" lengthAdjust="spacingAndGlyphs" transform="translate(1196.8 962.7) rotate(-45)">2013-…</text>
<text x="0" y="0" font-size="14.54" fill="#595959" text-anchor="end" textLength="47" lengthAdjust="spacingAndGlyphs" transform="translate(1237.8 962.7) rotate(-45)">2013-…</text>
<text x="0" y="0" font-size="14.54" fill="#595959" text-anchor="end" textLength="47" lengthAdjust="spacingAndGlyphs" transform="translate(1278.8 962.7) rotate(-45)">2013-…</text>
<text x="0" y="0" font-size="14.54" fill="#595959" text-anchor="end" textLength="47" lengthAdjust="spacingAndGlyphs" transform="translate(1319.8 962.7) rotate(-45)">2013-…</text>
<text x="0" y="0" font-size="14.54" fill="#595959" text-anchor="end" textLength="47" lengthAdjust="spacingAndGlyphs" transform="translate(1360.8 962.7) rotate(-45)">2013-…</text>
<text x="0" y="0" font-size="14.54" fill="#595959" text-anchor="end" textLength="47" lengthAdjust="spacingAndGlyphs" transform="translate(1401.8 962.7) rotate(-45)">2014-…</text>
<text x="0" y="0" font-size="14.54" fill="#595959" text-anchor="end" textLength="47" lengthAdjust="spacingAndGlyphs" transform="translate(1442.8 962.7) rotate(-45)">2014-…</text>
<text x="0" y="0" font-size="14.54" fill="#595959" text-anchor="end" textLength="47" lengthAdjust="spacingAndGlyphs" transform="translate(1483.8 962.7) rotate(-45)">2014-…</text>
<text x="0" y="0" font-size="14.54" fill="#595959" text-anchor="end" textLength="47" lengthAdjust="spacingAndGlyphs" transform="translate(1524.8 962.7) rotate(-45)">2014-…</text>
<text x="0" y="0" font-size="14.54" fill="#595959" text-anchor="end" textLength="47" lengthAdjust="spacingAndGlyphs" transform="translate(1565.8 962.7) rotate(-45)">2014-…</text>
<text x="0" y="0" font-size="14.54" fill="#595959" text-anchor="end" textLength="47" lengthAdjust="spacingAndGlyphs" transform="translate(1606.8 962.7) rotate(-45)">2014-…</text>
<path d="M 0 1022 Q 0 1030 8 1030 L 0 1031 Z" fill="#c4c4c4"/>
<path d="M 1714 1022 Q 1714 1030 1706 1030 L 1715 1031 Z" fill="#c4c4c4"/>
<path d="M 0 1022 Q 0 1030 8 1030 H 1706 Q 1714 1030 1714 1022" fill="none" stroke="#9a9a9a" stroke-width="1"/>
<rect x="0" y="1030" width="1715" height="1" fill="#a0a0a0"/></svg>
</body></html>
